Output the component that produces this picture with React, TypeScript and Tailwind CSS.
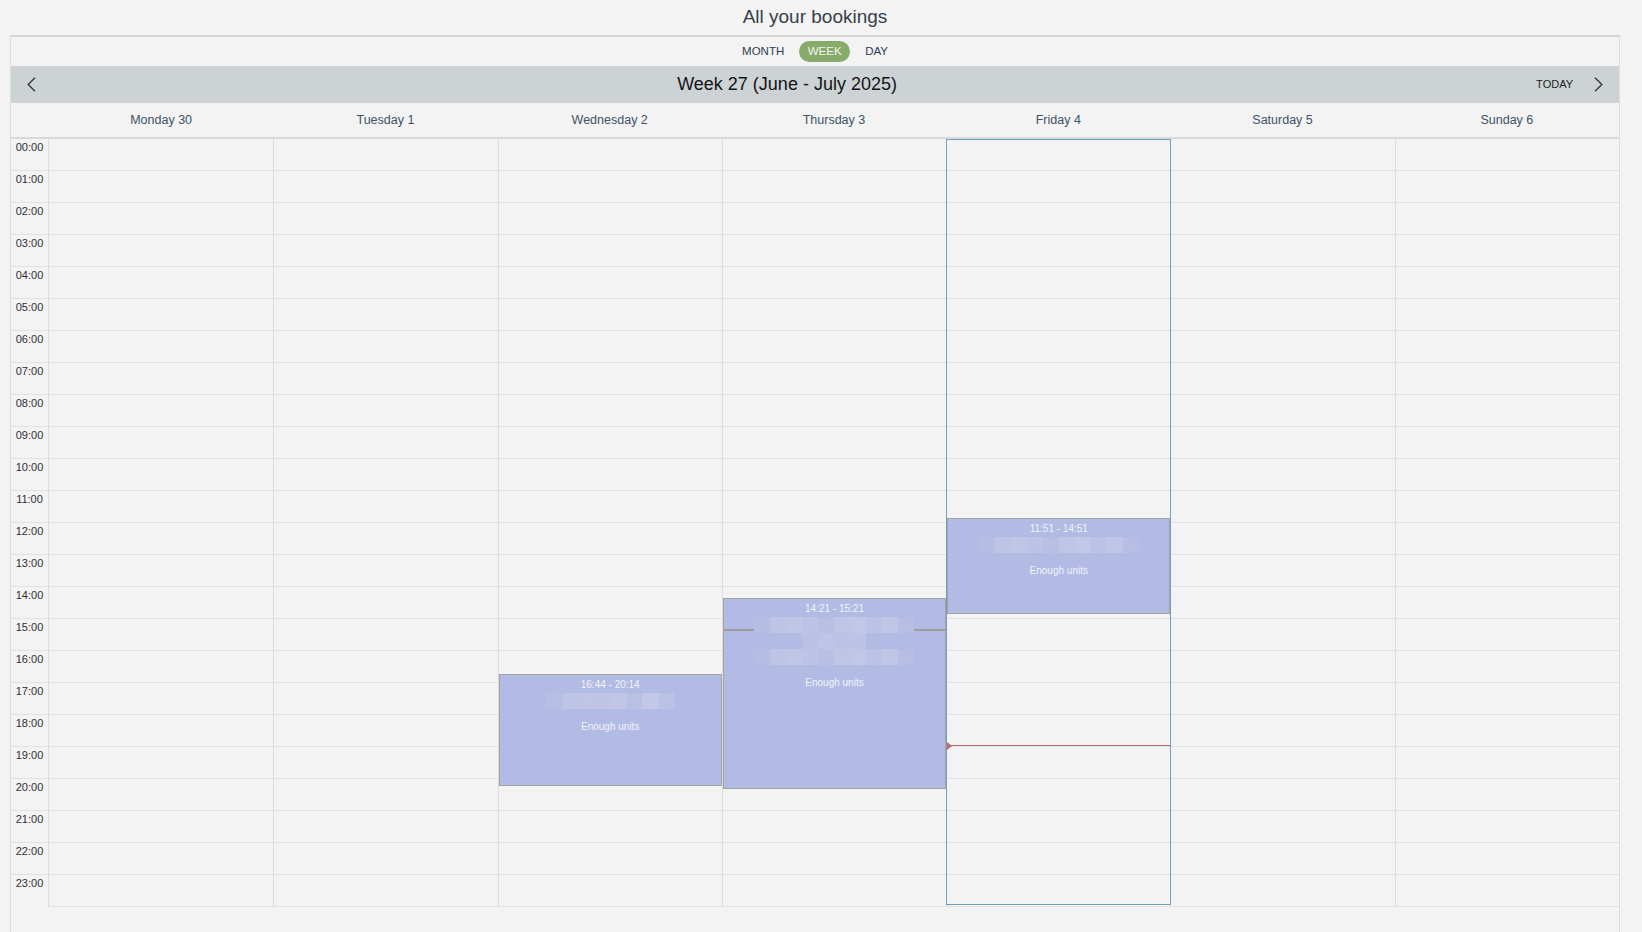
import React from 'react';

const HOURS = Array.from({ length: 24 }, (_, i) => `${String(i).padStart(2, '0')}:00`);
const DAYS = ['Monday 30', 'Tuesday 1', 'Wednesday 2', 'Thursday 3', 'Friday 4', 'Saturday 5', 'Sunday 6'];

// pixelated (blurred-out) name blocks
const BLUR_A = ['#b7bee3', '#bec4e6', '#c0c5e6', '#bfc4e5', '#c1c6e7', '#b9c0e4', '#c4c8e8', '#bcc2e5'];
const BLUR_B = ['#b6bde2', '#bfc4e5', '#c2c6e6', '#bec3e5', '#b9bfe3', '#c0c5e6', '#c3c7e7', '#bdc2e4', '#c1c5e6', '#b8bee3'];
const BLUR_C = ['#bac1e4', '#bfc4e6', '#bcc2e5', '#bec3e6'];

const Blur = ({ colors }: { colors: string[] }) => (
  <div className="flex justify-center">
    {colors.map((c, i) => (
      <div key={i} className="w-[16px] h-[16px]" style={{ backgroundColor: c }} />
    ))}
  </div>
);

type EventProps = {
  top: number;
  height: number;
  time: string;
  rows: string[][];
  split?: number;
};

const EventBox = ({ top, height, time, rows, split }: EventProps) => (
  <div
    className="absolute left-0 right-0 z-10 bg-[#b1bbe4] border border-[#a3a3a3] text-center text-[10px] text-[#f2f3fb]"
    style={{ top, height }}
  >
    {split !== undefined && (
      <div className="absolute left-0 right-0 h-[2px] bg-[#9d9d9d]" style={{ top: split }} />
    )}
    <div className="relative pt-[2px]">
      <div className="leading-[16px]">{time}</div>
      {rows.map((r, i) => (
        <Blur key={i} colors={r} />
      ))}
      <div className="mt-[10px] leading-[16px]">Enough units</div>
    </div>
  </div>
);

const Chevron = ({ dir }: { dir: 'left' | 'right' }) => (
  <svg width="9" height="15" viewBox="0 0 9 15" fill="none" stroke="#3a3a3a" strokeWidth="1.4">
    {dir === 'left' ? <polyline points="8,0.8 1.2,7.5 8,14.2" /> : <polyline points="1,0.8 7.8,7.5 1,14.2" />}
  </svg>
);

export default function App() {
  return (
    <div className="h-[932px] overflow-hidden bg-[#f2f3f2] font-['Liberation_Sans',Arial,sans-serif]">
      {/* Titulo */}
      <div className="ml-[10px] w-[1610px] h-[35px] flex items-center justify-center text-[19px] text-[#36404b]">
        All your bookings
      </div>

      <div className="ml-[10px] w-[1610px] h-[897px] border-x border-[#dcdede] border-t-2 border-t-[#d3d6d6]">
        {/* Vistas */}
        <div className="h-[29px] flex items-center justify-center gap-[15px] text-[11.5px] text-[#2e3d52]">
          <span>MONTH</span>
          <span className="bg-[#87ab6a] text-[#f1f5ec] rounded-full px-[8.5px] h-[21px] flex items-center">WEEK</span>
          <span>DAY</span>
        </div>

        {/* Navegacion */}
        <div className="h-[37px] bg-[#cdd2d4] flex items-center">
          <div className="w-[29px] pl-[16px] flex items-center">
            <Chevron dir="left" />
          </div>
          <div className="flex-1 text-center text-[18px] text-[#141414]">Week 27 (June - July 2025)</div>
          <div className="flex items-center gap-[21px] pl-[2px] pr-[16px]">
            <span className="text-[11px] text-[#1e1e1e]">TODAY</span>
            <Chevron dir="right" />
          </div>
        </div>

        {/* Cabecera de dias */}
        <div className="grid grid-cols-[38px_repeat(7,minmax(0,1fr))] h-[36px] border-b-2 border-[#d8dada]">
          <div />
          {DAYS.map(d => (
            <div key={d} className="flex items-center justify-center pt-px text-[12.5px] text-[#3d5269]">
              {d}
            </div>
          ))}
        </div>

        {/* Rejilla */}
        <div className="grid grid-cols-[38px_repeat(7,minmax(0,1fr))]">
          <div className="border-r border-[#dcdede]">
            {HOURS.map((h, i) => (
              <div
                key={h}
                className={`h-[32px] text-center text-[11px] leading-[13px] pt-[2px] text-[#2f2f35] ${i < 23 ? 'border-b border-[#e1e3e3]' : ''}`}
              >
                {h}
              </div>
            ))}
          </div>
          {DAYS.map((d, di) => (
            <div key={d} className={`relative ${di > 0 ? 'border-l border-[#dcdede]' : ''} ${di === 4 ? 'z-10' : ''}`}>
              {HOURS.map(h => (
                <div key={h} className="h-[32px] border-b border-[#e1e3e3]" />
              ))}

              {di === 2 && <EventBox top={535} height={112} time="16:44 - 20:14" rows={[BLUR_A]} />}
              {di === 3 && (
                <EventBox top={459} height={191} time="14:21 - 15:21" rows={[BLUR_B, BLUR_C, BLUR_B]} split={30} />
              )}
              {di === 4 && (
                <>
                  <EventBox top={379} height={96} time="11:51 - 14:51" rows={[BLUR_B]} />
                  {/* linea de hora actual */}
                  <div className="absolute left-0 right-0 top-[606px] h-px bg-[#c2676d]">
                    <svg className="absolute -top-[3.5px] left-0" width="5" height="8" viewBox="0 0 5 8">
                      <polygon points="0,0 5,4 0,8" fill="#c2676d" />
                    </svg>
                  </div>
                  <div className="absolute -left-px right-[-1px] top-0 bottom-[2px] border border-[#6f9fbd] pointer-events-none z-20" />
                </>
              )}
            </div>
          ))}
        </div>
      </div>
    </div>
  );
}
